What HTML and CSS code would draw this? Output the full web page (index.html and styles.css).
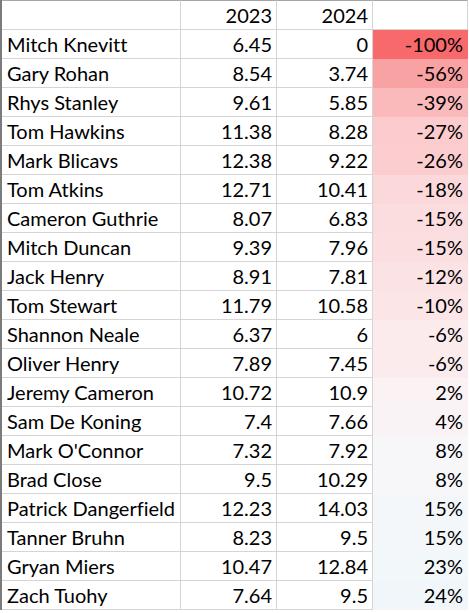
FILE: index.html
```html
<!DOCTYPE html>
<html lang="en">
<head>
<meta charset="utf-8">
<title>Player comparison</title>
<link rel="stylesheet" href="styles.css">
</head>
<body>
<table class="sheet">
  <colgroup>
    <col class="col-a"><col class="col-b"><col class="col-c"><col class="col-d">
  </colgroup>
  <tr class="head"><td></td><td class="num">2023</td><td class="num">2024</td><td class="num"></td></tr>
  <tr><td>Mitch Knevitt</td><td class="num">6.45</td><td class="num">0</td><td class="num pct" style="background:#f8696b;border-color:#f8696b">-100%</td></tr>
  <tr><td>Gary Rohan</td><td class="num">8.54</td><td class="num">3.74</td><td class="num pct" style="background:#f9a2a4;border-color:#f9a2a4">-56%</td></tr>
  <tr><td>Rhys Stanley</td><td class="num">9.61</td><td class="num">5.85</td><td class="num pct" style="background:#fab9bb;border-color:#fab9bb">-39%</td></tr>
  <tr><td>Tom Hawkins</td><td class="num">11.38</td><td class="num">8.28</td><td class="num pct" style="background:#fbcbcd;border-color:#fbcbcd">-27%</td></tr>
  <tr><td>Mark Blicavs</td><td class="num">12.38</td><td class="num">9.22</td><td class="num pct" style="background:#fbcdcf;border-color:#fbcdcf">-26%</td></tr>
  <tr><td>Tom Atkins</td><td class="num">12.71</td><td class="num">10.41</td><td class="num pct" style="background:#fbd9db;border-color:#fbd9db">-18%</td></tr>
  <tr><td>Cameron Guthrie</td><td class="num">8.07</td><td class="num">6.83</td><td class="num pct" style="background:#fbdddf;border-color:#fbdddf">-15%</td></tr>
  <tr><td>Mitch Duncan</td><td class="num">9.39</td><td class="num">7.96</td><td class="num pct" style="background:#fbdee0;border-color:#fbdee0">-15%</td></tr>
  <tr><td>Jack Henry</td><td class="num">8.91</td><td class="num">7.81</td><td class="num pct" style="background:#fbe2e4;border-color:#fbe2e4">-12%</td></tr>
  <tr><td>Tom Stewart</td><td class="num">11.79</td><td class="num">10.58</td><td class="num pct" style="background:#fce5e7;border-color:#fce5e7">-10%</td></tr>
  <tr><td>Shannon Neale</td><td class="num">6.37</td><td class="num">6</td><td class="num pct" style="background:#fcebed;border-color:#fcebed">-6%</td></tr>
  <tr><td>Oliver Henry</td><td class="num">7.89</td><td class="num">7.45</td><td class="num pct" style="background:#fcebed;border-color:#fcebed">-6%</td></tr>
  <tr><td>Jeremy Cameron</td><td class="num">10.72</td><td class="num">10.9</td><td class="num pct" style="background:#fbf2f4;border-color:#fbf2f4">2%</td></tr>
  <tr><td>Sam De Koning</td><td class="num">7.4</td><td class="num">7.66</td><td class="num pct" style="background:#faf3f5;border-color:#faf3f5">4%</td></tr>
  <tr><td>Mark O'Connor</td><td class="num">7.32</td><td class="num">7.92</td><td class="num pct" style="background:#f7f6f9;border-color:#f7f6f9">8%</td></tr>
  <tr><td>Brad Close</td><td class="num">9.5</td><td class="num">10.29</td><td class="num pct" style="background:#f7f6f9;border-color:#f7f6f9">8%</td></tr>
  <tr><td>Patrick Dangerfield</td><td class="num">12.23</td><td class="num">14.03</td><td class="num pct" style="background:#f4f7fa;border-color:#f4f7fa">15%</td></tr>
  <tr><td>Tanner Bruhn</td><td class="num">8.23</td><td class="num">9.5</td><td class="num pct" style="background:#f4f7fa;border-color:#f4f7fa">15%</td></tr>
  <tr><td>Gryan Miers</td><td class="num">10.47</td><td class="num">12.84</td><td class="num pct" style="background:#f2f7fa;border-color:#f2f7fa">23%</td></tr>
  <tr><td>Zach Tuohy</td><td class="num">7.64</td><td class="num">9.5</td><td class="num pct" style="background:#f1f6fa;border-color:#f1f6fa">24%</td></tr>
</table>
</body>
</html>
```
FILE: styles.css
```css
html, body {
  margin: 0;
  padding: 0;
  background: #ffffff;
}
.sheet {
  border-collapse: separate;
  border-spacing: 0;
  table-layout: fixed;
  width: 468px;
  border-left: 2px solid #7b7b7b;
  font-family: Lato, "Open Sans", sans-serif;
  font-size: 20px;
  font-variant-ligatures: none;
  color: #000000;
}
.col-a { width: 179px; }
.col-b { width: 96px; }
.col-c { width: 96px; }
.col-d { width: 95px; }
.sheet td {
  padding: 0 4px 0 5px;
  box-sizing: border-box;
  line-height: 28px;
  height: 29px;
  border-right: 1px solid #d5d5d5;
  border-bottom: 1px solid #d5d5d5;
  white-space: nowrap;
  overflow: hidden;
  vertical-align: bottom;
}
.head td {
  border-top: 1px solid #a6a6a6;
  height: 30px;
}
.sheet .num {
  text-align: right;
  padding-left: 2px;
}
```
